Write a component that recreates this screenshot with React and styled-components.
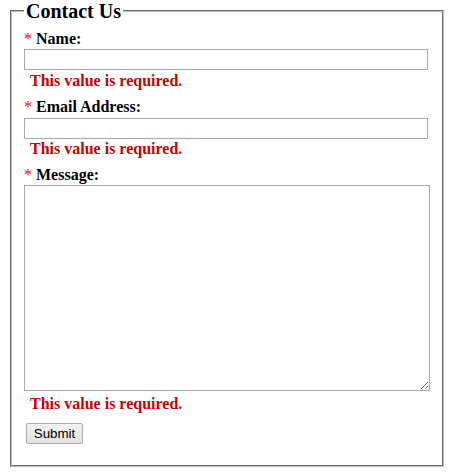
import React from "react";
import styled, { createGlobalStyle } from "styled-components";

const Global = createGlobalStyle`
  html, body { margin: 0; padding: 0; background: #fff; }
  body { font-family: "Liberation Serif", "Times New Roman", serif; color: #000; }
`;

const Fieldset = styled.fieldset`
  box-sizing: border-box;
  width: 434px;
  margin: 0 0 0 10px;
  padding: 8px 12px 21px 12px;
  border: 2px groove #c0c0c0;
  min-width: 0;
`;

const Legend = styled.legend`
  font-family: "Liberation Serif", "Times New Roman", serif;
  font-weight: bold;
  font-size: 20px;
  line-height: 22px;
  padding: 0 2px;
`;

const Field = styled.div`
  display: flex;
  flex-direction: column;
  align-items: flex-start;
  margin-top: ${(p) => (p.$first ? "0" : "8px")};
`;

const Label = styled.label`
  display: block;
  font-size: 16px;
  line-height: 18px;
  font-weight: bold;
`;

const Star = styled.span`
  color: #ff0000;
  font-weight: normal;
  margin-right: 4px;
`;

const Input = styled.input`
  box-sizing: border-box;
  display: block;
  width: 404px;
  height: 21px;
  margin: ${(p) => p.$top || "1px"} 0 0 0;
  padding: 1px 2px;
  border: 1px solid #a9a9a9;
  background: #fff;
  font-size: 13px;
  outline: none;
`;

const TextArea = styled.textarea`
  box-sizing: border-box;
  display: block;
  width: 406px;
  height: 206px;
  margin: 1px 0 0 0;
  padding: 2px;
  border: 1px solid #a9a9a9;
  background: #fff;
  font-size: 13px;
  outline: none;
`;

const Error = styled.div`
  color: #cc0000;
  font-size: 16px;
  line-height: 18px;
  font-weight: bold;
  padding-left: 6px;
  margin-top: ${(p) => p.$gap || "2px"};
`;

const Actions = styled.div`
  margin-top: 10px;
  padding-left: 2px;
  display: flex;
`;

const Button = styled.button`
  box-sizing: border-box;
  width: 57px;
  height: 21px;
  padding: 0;
  font-family: "Liberation Sans", Arial, sans-serif;
  font-size: 13.33px;
  color: #000;
  border: 1px solid #adadad;
  border-radius: 2px;
  background: linear-gradient(#f2f2f2, #e2e2e2);
  cursor: pointer;
`;

export default function App() {
  return (
    <>
      <Global />
      <form onSubmit={(e) => e.preventDefault()}>
        <Fieldset>
          <Legend>Contact Us</Legend>
          <Field $first>
            <Label htmlFor="name"><Star>*</Star>Name:</Label>
            <Input id="name" type="text" />
            <Error>This value is required.</Error>
          </Field>
          <Field>
            <Label htmlFor="email"><Star>*</Star>Email Address:</Label>
            <Input id="email" type="text" $top="2px" />
            <Error $gap="1px">This value is required.</Error>
          </Field>
          <Field>
            <Label htmlFor="message"><Star>*</Star>Message:</Label>
            <TextArea id="message" />
            <Error $gap="4px">This value is required.</Error>
          </Field>
          <Actions>
            <Button type="submit">Submit</Button>
          </Actions>
        </Fieldset>
      </form>
    </>
  );
}
